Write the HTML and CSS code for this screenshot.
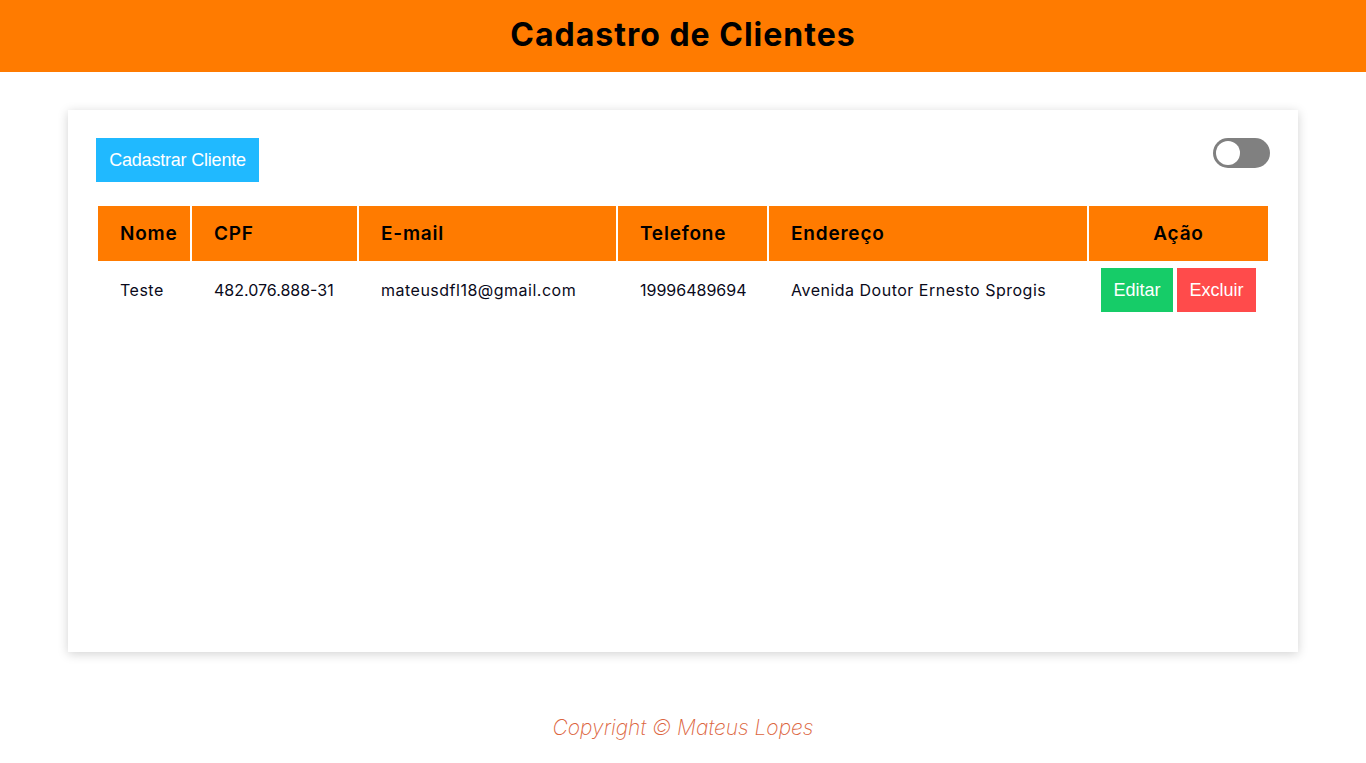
FILE: index.html
```html
<!DOCTYPE html>
<html lang="pt-BR">
<head>
<meta charset="utf-8">
<title>Cadastro de Clientes</title>
<link rel="stylesheet" href="styles.css">
</head>
<body>
<header class="topbar">
  <h1 class="title">Cadastro de Clientes</h1>
</header>
<main class="main">
  <section class="card">
    <div class="toolbar">
      <button class="btn btn-blue">Cadastrar Cliente</button>
      <label class="switch"><span class="knob"></span></label>
    </div>
    <table class="grid">
      <thead>
        <tr>
          <th class="c-nome">Nome</th>
          <th class="c-cpf">CPF</th>
          <th class="c-email">E-mail</th>
          <th class="c-tel">Telefone</th>
          <th class="c-end">Endereço</th>
          <th class="c-acao">Ação</th>
        </tr>
      </thead>
      <tbody>
        <tr>
          <td>Teste</td>
          <td class="num">482.076.888-31</td>
          <td>mateusdfl18@gmail.com</td>
          <td class="num">19996489694</td>
          <td>Avenida Doutor Ernesto Sprogis</td>
          <td class="actions"><button class="btn btn-green">Editar</button><button class="btn btn-red">Excluir</button></td>
        </tr>
      </tbody>
    </table>
  </section>
</main>
<footer class="footer">Copyright © Mateus Lopes</footer>
</body>
</html>
```
FILE: styles.css
```css
* { box-sizing: border-box; }
body {
  margin: 0;
  font-family: "Inter", "Noto Sans", sans-serif;
  background: #ffffff;
  color: #000;
}
.topbar {
  height: 72px;
  background: #ff7b00;
  display: flex;
  align-items: center;
  justify-content: center;
  padding-bottom: 4px;
}
.title {
  margin: 0;
  font-size: 32px;
  font-weight: 700;
  letter-spacing: 1px;
}
.main {
  padding: 38px 68px 0;
}
.card {
  height: 542px;
  background: #fff;
  box-shadow: 0 2px 10px rgba(0,0,0,0.18);
  padding: 28px;
}
.toolbar {
  display: flex;
  justify-content: space-between;
  align-items: flex-start;
  margin-bottom: 22px;
}
.btn {
  border: none;
  font-family: "Liberation Sans", Arial, sans-serif;
  font-size: 18px;
  color: #fff;
  height: 44px;
  padding: 0 13px;
  cursor: pointer;
}
.btn-blue { background: #20b9ff; width: 163px; padding: 0; letter-spacing: -0.2px; }
.btn-green { background: #16cc68; width: 72px; padding: 0; }
.btn-red { background: #ff4b4b; width: 79px; padding: 0; margin-left: 4px; }
.switch {
  width: 57px;
  height: 30px;
  border-radius: 15px;
  background: #808080;
  position: relative;
  display: block;
}
.knob {
  position: absolute;
  left: 3px;
  top: 3px;
  width: 24px;
  height: 24px;
  border-radius: 50%;
  background: #fff;
}
.grid {
  width: 100%;
  border-spacing: 2px;
  table-layout: fixed;
}
.grid th {
  background: #ff7b00;
  height: 55px;
  text-align: left;
  font-size: 19px;
  font-weight: 600;
  padding: 0 0 0 22px;
  letter-spacing: 0.8px;
}
.grid th.c-acao { text-align: center; padding: 0; }
.c-nome { width: 92px; }
.c-cpf { width: 165px; }
.c-email { width: 257px; }
.c-tel { width: 149px; }
.c-end { width: 318px; }
.c-acao { width: 179px; }
.grid td {
  font-size: 16px;
  padding: 5px 0 0 22px;
  height: 49px;
  vertical-align: middle;
  color: #0a0a1a;
  letter-spacing: 0.5px;
  white-space: nowrap;
}
.grid td.num { letter-spacing: 0; }
.grid td.actions { padding: 5px 0 0 12px; letter-spacing: 0; }
.footer {
  text-align: center;
  margin-top: 63px;
  font-size: 21px;
  font-style: italic;
  font-weight: 200;
  color: #dc6540;
}
```
